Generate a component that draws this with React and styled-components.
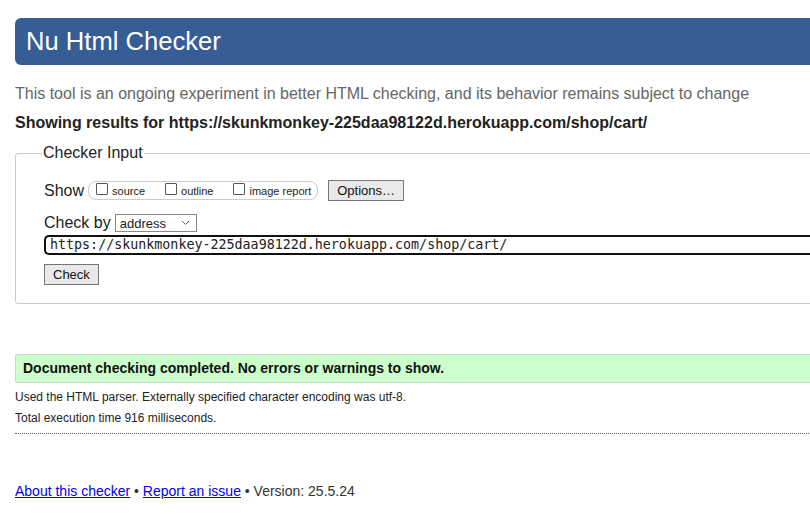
import React from "react";
import styled, { createGlobalStyle } from "styled-components";

const GlobalStyle = createGlobalStyle`
  html, body {
    margin: 0;
    padding: 0;
    background: #fff;
    overflow: hidden;
  }
  body {
    font-family: "Liberation Sans", Arial, sans-serif;
    color: #222;
  }
`;

const Page = styled.div`
  width: 1200px;
  padding: 18px 0 0 15px;
`;

const Header = styled.h1`
  margin: 0;
  background: #365d95;
  color: #fff;
  font-size: 25.6px;
  font-weight: 400;
  height: 47px;
  line-height: 46px;
  padding-left: 11px;
  border-radius: 6px 0 0 6px;
`;

const Intro = styled.p`
  margin: 19px 0 0;
  font-size: 16px;
  color: #666;
  line-height: 19px;
`;

const Showing = styled.p`
  margin: 10px 0 0;
  font-size: 16px;
  font-weight: 700;
  line-height: 19px;
`;

const Fieldset = styled.fieldset`
  margin: 12px 0 0;
  border: 1px solid #ccc;
  border-radius: 3px;
  padding: 8px 28px 18px;
`;

const Legend = styled.legend`
  font-size: 16px;
  padding: 0 1px;
  margin-left: -2px;
`;

const Row = styled.div`
  display: flex;
  align-items: center;
  font-size: 16px;
  margin-top: ${({ $top }) => $top || 0}px;
`;

const OptionGroup = styled.span`
  display: inline-flex;
  align-items: center;
  gap: 20px;
  margin-left: 4px;
  height: 17px;
  padding: 0 6px 0 7px;
  border: 1px solid #ccc;
  border-radius: 8px;
`;

const OptionLabel = styled.label`
  display: inline-flex;
  align-items: center;
  font-size: 11px;
  color: #222;
`;

const Box = styled.span`
  display: inline-block;
  width: 10px;
  height: 10px;
  border: 1px solid #555;
  border-radius: 1px;
  margin-right: 4px;
  position: relative;
  top: -2px;
`;

const Button = styled.button`
  font-family: "Liberation Sans", Arial, sans-serif;
  font-size: 13px;
  color: #111;
  background: #e9e9e9;
  border: 1px solid #767676;
  border-radius: 0;
  padding: 0 8px;
  height: 21px;
  margin-left: ${({ $left }) => $left || 0}px;
`;

const Select = styled.span`
  display: inline-flex;
  align-items: center;
  justify-content: space-between;
  margin-left: 4px;
  width: 82px;
  height: 18px;
  box-sizing: border-box;
  border: 1px solid #888;
  font-size: 13px;
  padding: 0 6px 0 4px;
  background: #fff;
`;

const UrlInput = styled.div`
  margin-top: 3px;
  height: 20px;
  box-sizing: border-box;
  border: 2px solid #111;
  border-right: none;
  border-radius: 5px 0 0 5px;
  font-family: "DejaVu Sans Mono", monospace;
  font-size: 13.33px;
  line-height: 16px;
  padding-left: 4px;
  color: #222;
`;

const Success = styled.p`
  margin: 50px 0 0;
  height: 29px;
  box-sizing: border-box;
  border: 1px solid #c4d8c4;
  border-right: none;
  border-radius: 3px 0 0 3px;
  background: #ccffcc;
  font-size: 14px;
  font-weight: 700;
  line-height: 27px;
  padding-left: 7px;
  color: #111;
`;

const Detail = styled.p`
  margin: ${({ $top }) => $top}px 0 0;
  font-size: 12px;
  line-height: 14px;
  color: #222;
`;

const Divider = styled.hr`
  margin: 8px 0 0;
  border: none;
  border-top: 1px dotted #666;
`;

const Footer = styled.p`
  margin: 49px 0 0;
  font-size: 14px;
  line-height: 16px;
  color: #333;
`;

const Link = styled.a`
  color: #0000ee;
  text-decoration: underline;
`;

const Chevron = () => (
  <svg width="9" height="6" viewBox="0 0 9 6">
    <path d="M1 1 L4.5 4.5 L8 1" fill="none" stroke="#666" strokeWidth="1" />
  </svg>
);

const url = "https://skunkmonkey-225daa98122d.herokuapp.com/shop/cart/";

const App = () => {
  return (
    <Page>
      <GlobalStyle />
      <Header>Nu Html Checker</Header>
      <Intro>
        This tool is an ongoing experiment in better HTML checking, and its behavior remains subject to change
      </Intro>
      <Showing>Showing results for {url}</Showing>
      <Fieldset>
        <Legend>Checker Input</Legend>
        <Row $top={10}>
          Show
          <OptionGroup>
            <OptionLabel><Box />source</OptionLabel>
            <OptionLabel><Box />outline</OptionLabel>
            <OptionLabel><Box />image report</OptionLabel>
          </OptionGroup>
          <Button $left={10}>Options…</Button>
        </Row>
        <Row $top={13}>
          Check by
          <Select>
            address
            <Chevron />
          </Select>
        </Row>
        <UrlInput>{url}</UrlInput>
        <Row $top={9}>
          <Button>Check</Button>
        </Row>
      </Fieldset>
      <Success>Document checking completed. No errors or warnings to show.</Success>
      <Detail $top={7}>Used the HTML parser. Externally specified character encoding was utf-8.</Detail>
      <Detail $top={7}>Total execution time 916 milliseconds.</Detail>
      <Divider />
      <Footer>
        <Link href="#">About this checker</Link> • <Link href="#">Report an issue</Link> • Version: 25.5.24
      </Footer>
    </Page>
  );
};

export default App;
